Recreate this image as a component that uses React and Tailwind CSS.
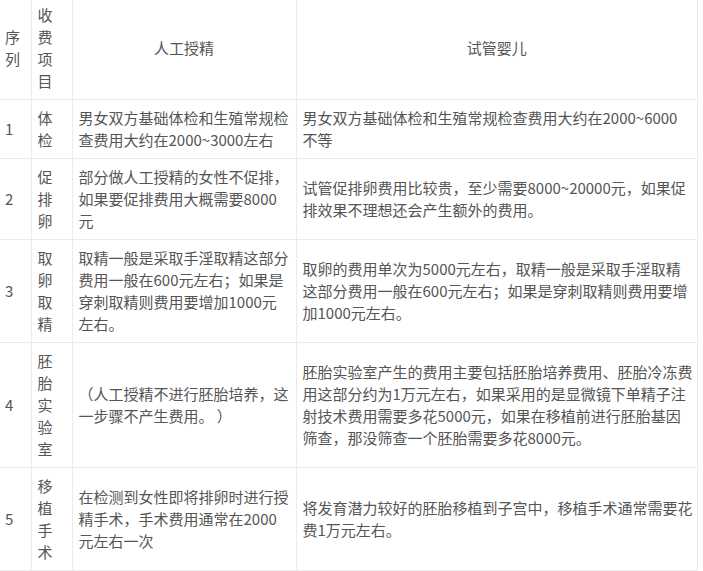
import React from "react";

const rows = [
  {
    n: "1",
    item: "体检",
    a: "男女双方基础体检和生殖常规检查费用大约在2000~3000左右",
    b: (
      <>
        男女双方基础体检和生殖常规检查费用大约在2000~6000
        <br />
        不等
      </>
    ),
  },
  {
    n: "2",
    item: "促排卵",
    a: "部分做人工授精的女性不促排，如果要促排费用大概需要8000元",
    b: "试管促排卵费用比较贵，至少需要8000~20000元，如果促排效果不理想还会产生额外的费用。",
  },
  {
    n: "3",
    item: "取卵取精",
    a: "取精一般是采取手淫取精这部分费用一般在600元左右；如果是穿刺取精则费用要增加1000元左右。",
    b: "取卵的费用单次为5000元左右，取精一般是采取手淫取精这部分费用一般在600元左右；如果是穿刺取精则费用要增加1000元左右。",
  },
  {
    n: "4",
    item: "胚胎实验室",
    a: "（人工授精不进行胚胎培养，这一步骤不产生费用。 ）",
    b: "胚胎实验室产生的费用主要包括胚胎培养费用、胚胎冷冻费用这部分约为1万元左右，如果采用的是显微镜下单精子注射技术费用需要多花5000元，如果在移植前进行胚胎基因筛查，那没筛查一个胚胎需要多花8000元。",
  },
  {
    n: "5",
    item: "移植手术",
    a: "在检测到女性即将排卵时进行授精手术，手术费用通常在2000元左右一次",
    b: "将发育潜力较好的胚胎移植到子宫中，移植手术通常需要花费1万元左右。",
  },
];

const cell =
  "border-r border-b border-[#ebebeb] align-middle py-[7px] leading-[22px] break-all";

export default function App() {
  return (
    <div
      className="w-[703px] h-[571px] overflow-hidden bg-white text-[#555555] text-[15px]"
      style={{ fontFamily: '"Noto Sans CJK SC", "Microsoft YaHei", sans-serif' }}
    >
      <table className="table-fixed border-collapse w-[698px] -mt-[3px]">
        <colgroup>
          <col className="w-[31px]" />
          <col className="w-[41px]" />
          <col className="w-[224px]" />
          <col />
        </colgroup>
        <tbody>
          <tr>
            <td className={`${cell} pl-[5px] pr-[4px]`}>序列</td>
            <td className={`${cell} pl-[6px] pr-[6px]`}>收费项目</td>
            <td className={`${cell} text-center`}>人工授精</td>
            <td className={`${cell} text-center`}>试管婴儿</td>
          </tr>
          {rows.map((r) => (
            <tr key={r.n}>
              <td className={`${cell} pl-[5px] pr-[4px]`}>{r.n}</td>
              <td className={`${cell} pl-[6px] pr-[6px]`}>{r.item}</td>
              <td className={`${cell} pl-[6px] pr-[4px]`}>{r.a}</td>
              <td className={`${cell} pl-[6px] pr-[4px]`}>{r.b}</td>
            </tr>
          ))}
        </tbody>
      </table>
    </div>
  );
}
